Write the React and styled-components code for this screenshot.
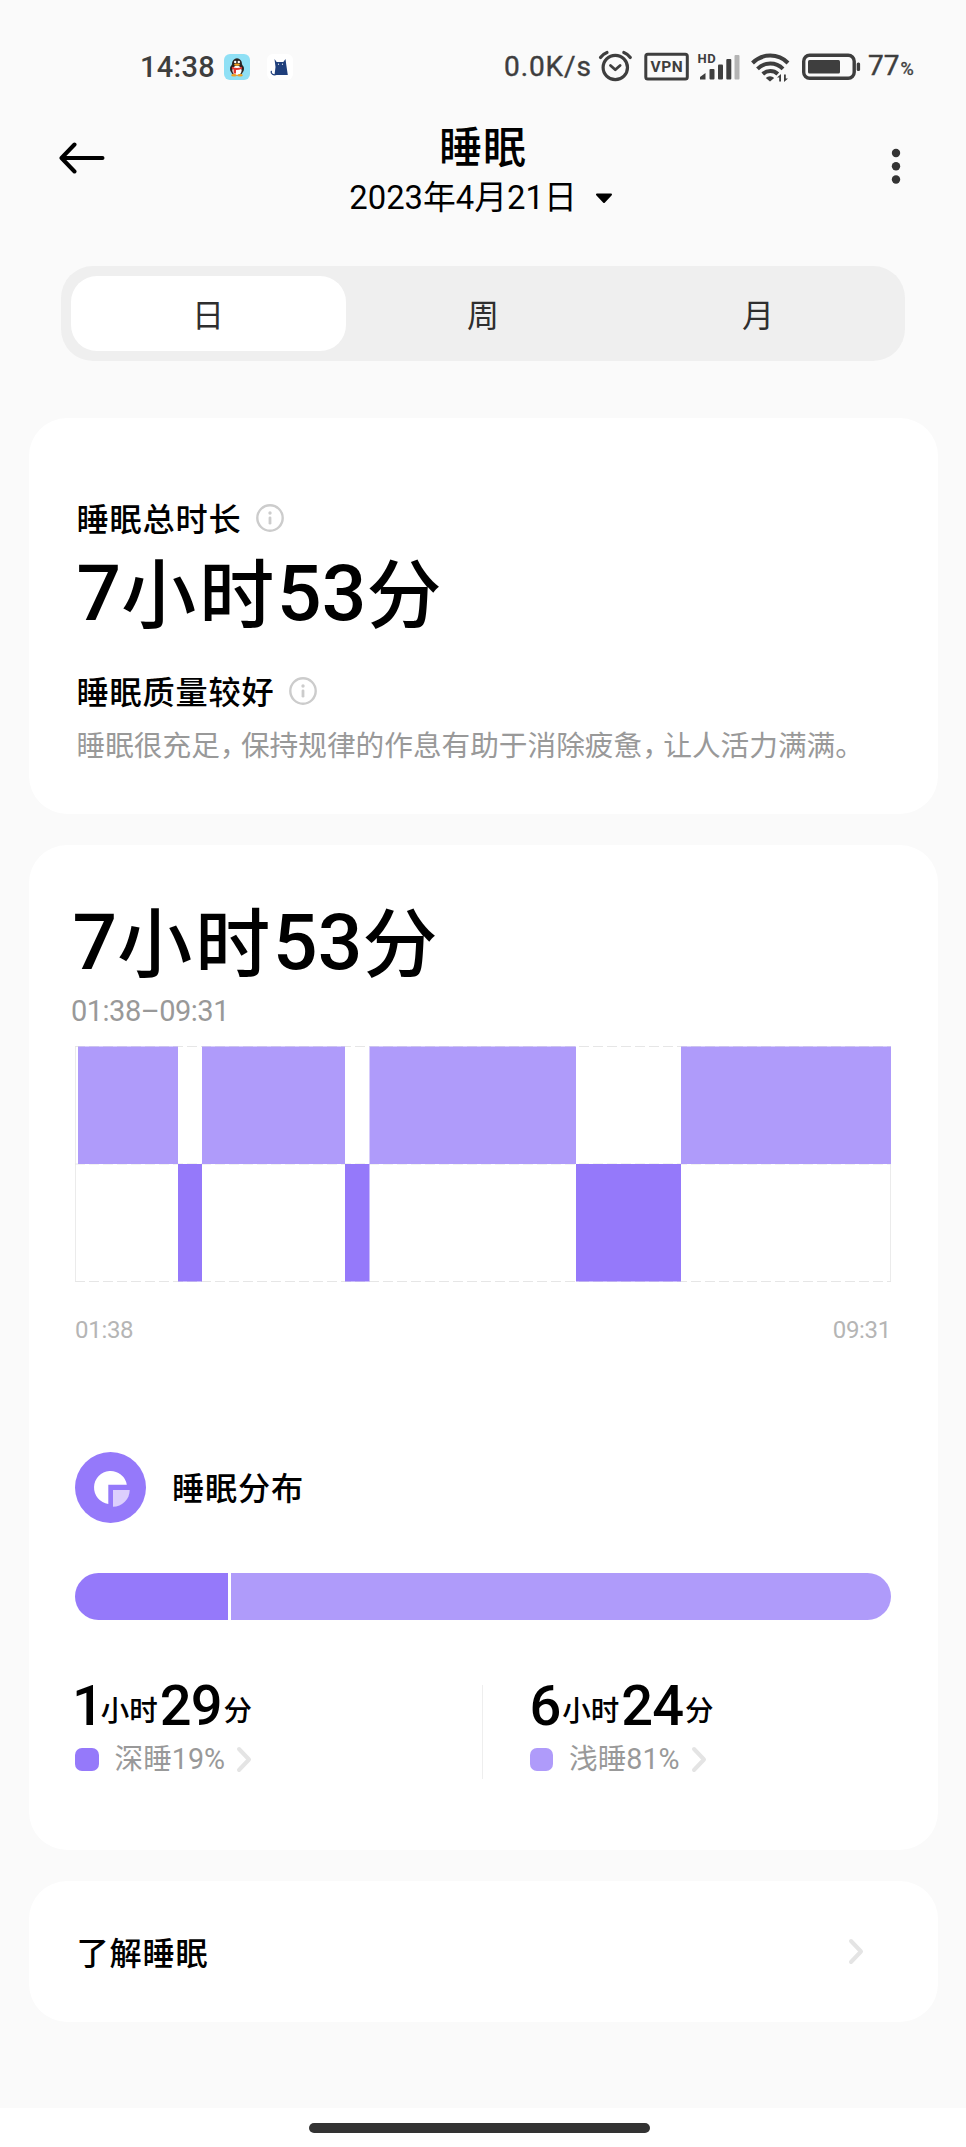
import React from 'react';
import styled, { createGlobalStyle } from 'styled-components';

const GlobalStyle = createGlobalStyle`
    * {
        box-sizing: border-box;
    }

    body {
        margin: 0;
        background: #fafafa;
        color: #000;
        font-family: Roboto, "Noto Sans CJK SC", sans-serif;
    }
`;

const Page = styled.div`
    width: 966px;
    height: 2147px;
    display: flex;
    flex-flow: column nowrap;
    background: #fafafa;
    white-space: nowrap;
    overflow: hidden;
`;

const StatusBar = styled.div`
    height: 112px;
    padding: 22px 52px 0 140px;
    display: flex;
    align-items: center;
    justify-content: space-between;
    color: #3e3e3e;
    flex: none;
`;

const StatusGroup = styled.div`
    height: 40px;
    display: flex;
    align-items: center;
`;

const Clock = styled.div`
    font-size: 29px;
    font-weight: 500;
    line-height: 40px;
    width: 84px;
    letter-spacing: .3px;
`;

const Speed = styled.div`
    font-size: 28px;
    line-height: 40px;
    width: 94px;
    letter-spacing: .9px;
    -webkit-text-stroke: .4px #3e3e3e;
`;

const AppIcon = styled.svg`
    width: 26px;
    height: 26px;
    margin-right: 17px;
    display: block;
`;

const StatusIcons = styled.svg`
    width: 266px;
    height: 40px;
    display: block;
`;

const Battery = styled.div`
    font-size: 28px;
    line-height: 40px;
    width: 46px;
    margin-left: 4px;
    -webkit-text-stroke: .4px #3e3e3e;

    small {
        font-size: 18px;
        margin-left: 1px;
    }
`;

const Header = styled.div`
    height: 154px;
    padding: 0 59px;
    display: grid;
    grid-template-columns: 46px 1fr 46px;
    flex: none;
`;

const BackIcon = styled.svg`
    width: 46px;
    height: 34px;
    margin-top: 29px;
`;

const MoreIcon = styled.svg`
    width: 12px;
    height: 40px;
    margin-top: 34px;
    justify-self: end;
    margin-right: 5px;
`;

const Heading = styled.div`
    display: flex;
    flex-flow: column nowrap;
    align-items: center;
`;

const Title = styled.div`
    font-size: 43px;
    font-weight: 500;
    line-height: 56px;
    margin-top: 8px;
    letter-spacing: 1px;
`;

const DateRow = styled.div`
    display: flex;
    align-items: center;
    font-size: 32.8px;
    line-height: 44px;
    margin-right: 4px;
`;

const Caret = styled.svg`
    width: 18px;
    height: 11px;
    margin-left: 18px;
`;

const Tabs = styled.div`
    width: 844px;
    height: 95px;
    margin-left: 61px;
    padding: 10px 9.5px;
    display: flex;
    border-radius: 32px;
    background: #efefef;
    flex: none;
`;

const Tab = styled.div`
    flex: 1;
    border-radius: 26px;
    background: ${props => (props.$active ? '#fff' : 'transparent')};
    color: #2e2e2e;
    font-size: 32px;
    line-height: 81px;
    height: 75px;
    text-align: center;
`;

const Cards = styled.div`
    padding: 57px 28.5px 0;
    display: flex;
    flex-flow: column nowrap;
    gap: 31px;
    flex: 1;
`;

const Card = styled.div`
    height: ${props => props.$height}px;
    padding: 0 46.5px;
    border-radius: 38px;
    background: #fff;
    flex: none;
`;

const SummaryCard = styled(Card)`
    padding: 80px 48px 0;
`;

const ChartCard = styled(Card)`
    padding-top: 50px;
`;

const LinkCard = styled(Card)`
    padding: 0 74px 0 48px;
    display: flex;
    align-items: center;
    justify-content: space-between;
`;

const Label = styled.div`
    display: flex;
    align-items: center;
    font-size: 32.2px;
    font-weight: 500;
    line-height: 44px;
    letter-spacing: .8px;
`;

const LinkLabel = styled(Label)`
    margin-top: 5px;
`;

const InfoSvg = styled.svg`
    width: 28px;
    height: 28px;
    margin-left: 15px;
    margin-top: -5px;
`;

const Total = styled.div`
    font-size: 75px;
    font-weight: 500;
    line-height: 100px;
    letter-spacing: 2.8px;
`;

const TotalNumber = styled.span`
    font-size: 78.5px;
    letter-spacing: .2px;
    line-height: 1;
    position: relative;
    top: -2px;
`;

const TotalInCard = styled(Total)`
    margin-left: -2.5px;
`;

const SummaryTotal = styled(Total)`
    margin: 4px 0 25px;
`;

const Description = styled.div`
    font-size: 28.67px;
    line-height: 40px;
    margin-top: 11px;
    color: #999;
`;

const Comma = styled.span`
    letter-spacing: -7.5px;
`;

const Range = styled.div`
    font-size: 29px;
    line-height: 36px;
    margin: -2px 0 17px -4px;
    letter-spacing: -.5px;
    color: #999;
`;

const ChartSvg = styled.svg`
    width: 816px;
    height: 236px;
    display: block;
`;

const Axis = styled.div`
    display: flex;
    justify-content: space-between;
    margin-top: 32px;
    font-size: 24px;
    line-height: 32px;
    letter-spacing: -.3px;
    color: #b5b5b5;
`;

const SectionTitle = styled.div`
    height: 71px;
    display: flex;
    align-items: center;
    margin-top: 105.5px;
`;

const SectionLabel = styled(Label)`
    margin-top: 4px;
`;

const SectionIcon = styled.svg`
    width: 71px;
    height: 71px;
    margin-right: 26px;
`;

const Distribution = styled.div`
    height: 47px;
    margin-top: 50.5px;
    display: flex;
    gap: 3px;
    border-radius: 24px;
    overflow: hidden;
`;

const Portion = styled.div`
    background: ${props => props.$color};
`;

const Stats = styled.div`
    display: grid;
    grid-template-columns: 407px 1fr;
    margin-top: 65px;
    height: 90px;
`;

const Stat = styled.div`
    padding-left: ${props => (props.$divided ? '46.5px' : '0')};
    border-left: ${props => (props.$divided ? '1px solid #eee' : 'none')};
`;

const Duration = styled.div`
    display: flex;
    align-items: baseline;
    height: 55px;
    line-height: 43px;
`;

const Digits = styled.span`
    font-size: 56px;
    font-weight: 500;
    letter-spacing: ${props => (props.$narrow ? '-5px' : '-1px')};
    margin-left: ${props => (props.$narrow ? '-3px' : '0')};
`;

const Unit = styled.span`
    font-size: 28.5px;
    font-weight: 500;
    position: relative;
    top: -4px;
    margin: 0 2px 0 2px;
`;

const Legend = styled.div`
    display: flex;
    align-items: center;
    font-size: 28.67px;
    line-height: 39px;
    color: #999;
`;

const Swatch = styled.div`
    width: 23.5px;
    height: 23.5px;
    margin-right: 16px;
    border-radius: 7px;
    background: ${props => props.$color};
`;

const ChevronSvg = styled.svg`
    width: 16px;
    height: 27px;
`;

const LegendChevron = styled(ChevronSvg)`
    margin-left: 11px;
`;

const NavBar = styled.div`
    height: 39px;
    padding-top: 15px;
    background: #fff;
    flex: none;
`;

const HomeIndicator = styled.div`
    width: 341px;
    height: 10px;
    margin-left: 309px;
    border-radius: 5px;
    background: #333;
`;

const LIGHT = '#af9bfa';
const DEEP = '#9579fa';

// x offset, width, whether the stretch is deep sleep
const stages = [
    [3, 100, false],
    [103, 24, true],
    [127, 143, false],
    [270, 24.5, true],
    [294.5, 206.5, false],
    [501, 105, true],
    [606, 210, false],
];

const stats = [
    { hours: 1, minutes: 29, name: '深睡', percent: 19, color: DEEP },
    { hours: 6, minutes: 24, name: '浅睡', percent: 81, color: LIGHT },
];

const InfoIcon = () => (
    <InfoSvg viewBox="0 0 28 28">
        <circle cx="14" cy="14" r="12.7" fill="none" stroke="#ccc" strokeWidth="2.4" />
        <circle cx="14" cy="9" r="1.7" fill="#ccc" />
        <path d="M14 13.8v5.4" stroke="#ccc" strokeWidth="2.8" strokeLinecap="round" />
    </InfoSvg>
);

const chevron = <path d="M3 3l10 10.5L3 24" fill="none" stroke="#e4e4e4" strokeWidth="4" strokeLinecap="round" strokeLinejoin="round" />;

const PenguinIcon = () => (
    <AppIcon viewBox="0 0 26 26">
        <rect width="26" height="26" rx="6" fill="#8fe0f5" />
        <ellipse cx="13" cy="15" rx="7" ry="6.5" fill="#2b2320" />
        <ellipse cx="13" cy="10" rx="5" ry="5.8" fill="#2b2320" />
        <ellipse cx="13" cy="16.5" rx="4.6" ry="4.8" fill="#fff" />
        <circle cx="11.2" cy="8" r="1.2" fill="#fff" />
        <circle cx="14.8" cy="8" r="1.2" fill="#fff" />
        <ellipse cx="13" cy="10.7" rx="3" ry="1.1" fill="#f5a623" />
        <path d="M8 12.7q5 2.6 10 0v2q-3 1.4-6 1.4v3.4H9.6v-4L8 14.7z" fill="#e0352f" />
        <ellipse cx="10" cy="21.3" rx="2.8" ry="1.2" fill="#f0a020" />
        <ellipse cx="16" cy="21.3" rx="2.8" ry="1.2" fill="#f0a020" />
    </AppIcon>
);

const CatIcon = () => (
    <AppIcon viewBox="0 0 26 26">
        <rect width="26" height="26" rx="6" fill="#fff" />
        <path d="M7.5 5l2.2 3h6.6L18.5 5l.8 6 1.5 10H7.5l1-8z" fill="#1f3f7c" />
        <path d="M9.5 20.5c-3 1-6-.5-5.2-3.2" fill="none" stroke="#1f3f7c" strokeWidth="1.3" strokeLinecap="round" />
        <circle cx="11.5" cy="10.2" r=".6" fill="#fff" />
        <circle cx="15.5" cy="10.2" r=".6" fill="#fff" />
    </AppIcon>
);

const SystemIcons = () => (
    <StatusIcons viewBox="598 47 266 40">
        <g fill="none" stroke="#3e3e3e" strokeLinecap="round">
            <circle cx="615.3" cy="67.5" r="12.2" strokeWidth="3.2" />
            <path d="M610.5 65.5l4.8 4.3 4.8-4.3" strokeWidth="2.8" strokeLinejoin="round" />
            <path d="M600.5 57.5q2.5-3.5 6.5-5M630.3 57.5q-2.5-3.5-6.5-5" strokeWidth="3.2" />
            <rect x="645.8" y="54.3" width="41.5" height="24.7" rx="2" strokeWidth="3" />
        </g>
        <text x="666.8" y="72.3" fontSize="15.5" fontWeight="700" textAnchor="middle" letterSpacing=".5" fill="#3e3e3e">VPN</text>
        <text x="697.5" y="63" fontSize="13" fontWeight="700" letterSpacing=".6" fill="#3e3e3e">HD</text>
        <g fill="#3e3e3e">
            <path d="M700 79.5v-2.5l5.5-4v6.5z" />
            <rect x="709.5" y="69" width="5" height="10.5" rx="1" />
            <rect x="718" y="64.5" width="5" height="15" rx="1" />
            <rect x="726.3" y="59" width="5" height="20.5" rx="1" />
            <rect x="734.5" y="55" width="5" height="24.5" rx="1" fill="#b4b4b4" />
        </g>
        <g fill="none" stroke="#3e3e3e" strokeWidth="4">
            <path d="M752.5 63a25 25 0 0 1 35.5 0" />
            <path d="M757.5 68.8a18 18 0 0 1 25.5 0" />
            <path d="M762.8 74a11 11 0 0 1 15 0" />
        </g>
        <path d="M765.8 78a6 6 0 0 1 8.4 0l-4.2 3.5z" fill="#3e3e3e" />
        <path d="M777 77.5l4-3.5v7.5h-1.8v-4zM788 78.5l-4 3.5v-7.5h1.8v4z" fill="#3e3e3e" />
        <rect x="803.7" y="55.3" width="50.5" height="23" rx="6" fill="none" stroke="#3e3e3e" strokeWidth="3.4" />
        <rect x="808" y="60" width="32" height="13.5" rx="1.5" fill="#3e3e3e" />
        <rect x="856.7" y="62.5" width="3.4" height="8.5" rx="1.5" fill="#3e3e3e" />
    </StatusIcons>
);

const SleepChart = () => (
    <ChartSvg viewBox="0 0 816 236">
        <path d="M.5 0v235.5M815.5 0v235.5" stroke="#ebebeb" />
        <path d="M0 .5h816M0 118h816M0 235.5h816" stroke="#e6e6e6" strokeDasharray="10 4" />
        {
            stages.map(([x, width, deep]) => (
                <rect
                    key={x}
                    x={x}
                    y={deep ? 118 : 0.5}
                    width={width}
                    height="117.5"
                    fill={deep ? DEEP : LIGHT}
                />
            ))
        }
    </ChartSvg>
);

const TotalText = () => (
    <>
        <TotalNumber>7</TotalNumber>小时<TotalNumber>53</TotalNumber>分
    </>
);

const App = () => {
    return (
        <>
            <GlobalStyle />
            <Page>
                <StatusBar>
                    <StatusGroup>
                        <Clock>14:38</Clock>
                        <PenguinIcon />
                        <CatIcon />
                    </StatusGroup>
                    <StatusGroup>
                        <Speed>0.0K/s</Speed>
                        <SystemIcons />
                        <Battery>77<small>%</small></Battery>
                    </StatusGroup>
                </StatusBar>
                <Header>
                    <BackIcon viewBox="0 0 46 34" fill="none" stroke="#000" strokeWidth="4" strokeLinecap="round" strokeLinejoin="round">
                        <path d="M43.5 17H3M15.5 3.5L2.5 17l13 13.5" />
                    </BackIcon>
                    <Heading>
                        <Title>睡眠</Title>
                        <DateRow>
                            2023年4月21日
                            <Caret viewBox="0 0 18 11">
                                <path d="M2 1.5h14L9 9z" stroke="#000" strokeWidth="2" strokeLinejoin="round" />
                            </Caret>
                        </DateRow>
                    </Heading>
                    <MoreIcon viewBox="0 0 12 40" fill="#333">
                        <circle cx="6" cy="7" r="4.2" />
                        <circle cx="6" cy="20.2" r="4.2" />
                        <circle cx="6" cy="33.5" r="4.2" />
                    </MoreIcon>
                </Header>
                <Tabs>
                    <Tab $active>日</Tab>
                    <Tab>周</Tab>
                    <Tab>月</Tab>
                </Tabs>
                <Cards>
                    <SummaryCard $height={396}>
                        <Label>睡眠总时长<InfoIcon /></Label>
                        <SummaryTotal><TotalText /></SummaryTotal>
                        <Label>睡眠质量较好<InfoIcon /></Label>
                        <Description>
                            睡眠很充足<Comma>，</Comma>保持规律的作息有助于消除疲惫<Comma>，</Comma>让人活力满满。
                        </Description>
                    </SummaryCard>
                    <ChartCard $height={1005}>
                        <TotalInCard><TotalText /></TotalInCard>
                        <Range>01:38–09:31</Range>
                        <SleepChart />
                        <Axis>
                            <span>01:38</span>
                            <span>09:31</span>
                        </Axis>
                        <SectionTitle>
                            <SectionIcon viewBox="0 0 71 71">
                                <circle cx="35.5" cy="35.5" r="35.5" fill={DEEP} />
                                <path d="M33.3 51.9A16.5 16.5 0 1 1 51.8 32.7H33.3z" fill="#fff" />
                                <path d="M38 38h16.7A16.7 16.7 0 0 1 38 54.7z" fill="#dccffd" />
                            </SectionIcon>
                            <SectionLabel>睡眠分布</SectionLabel>
                        </SectionTitle>
                        <Distribution>
                            <Portion $color={DEEP} style={{ width: `${(stats[0].percent - 0.3)}%` }} />
                            <Portion $color={LIGHT} style={{ flex: 1 }} />
                        </Distribution>
                        <Stats>
                            {
                                stats.map((item, index) => (
                                    <Stat key={item.name} $divided={index > 0}>
                                        <Duration>
                                            <Digits $narrow={item.hours === 1}>{item.hours}</Digits>
                                            <Unit>小时</Unit>
                                            <Digits>{item.minutes}</Digits>
                                            <Unit>分</Unit>
                                        </Duration>
                                        <Legend>
                                            <Swatch $color={item.color} />
                                            {item.name}{item.percent}%
                                            <LegendChevron viewBox="0 0 16 27">{chevron}</LegendChevron>
                                        </Legend>
                                    </Stat>
                                ))
                            }
                        </Stats>
                    </ChartCard>
                    <LinkCard $height={141}>
                        <LinkLabel>了解睡眠</LinkLabel>
                        <ChevronSvg viewBox="0 0 16 27">{chevron}</ChevronSvg>
                    </LinkCard>
                </Cards>
                <NavBar>
                    <HomeIndicator />
                </NavBar>
            </Page>
        </>
    );
}

export default App;
